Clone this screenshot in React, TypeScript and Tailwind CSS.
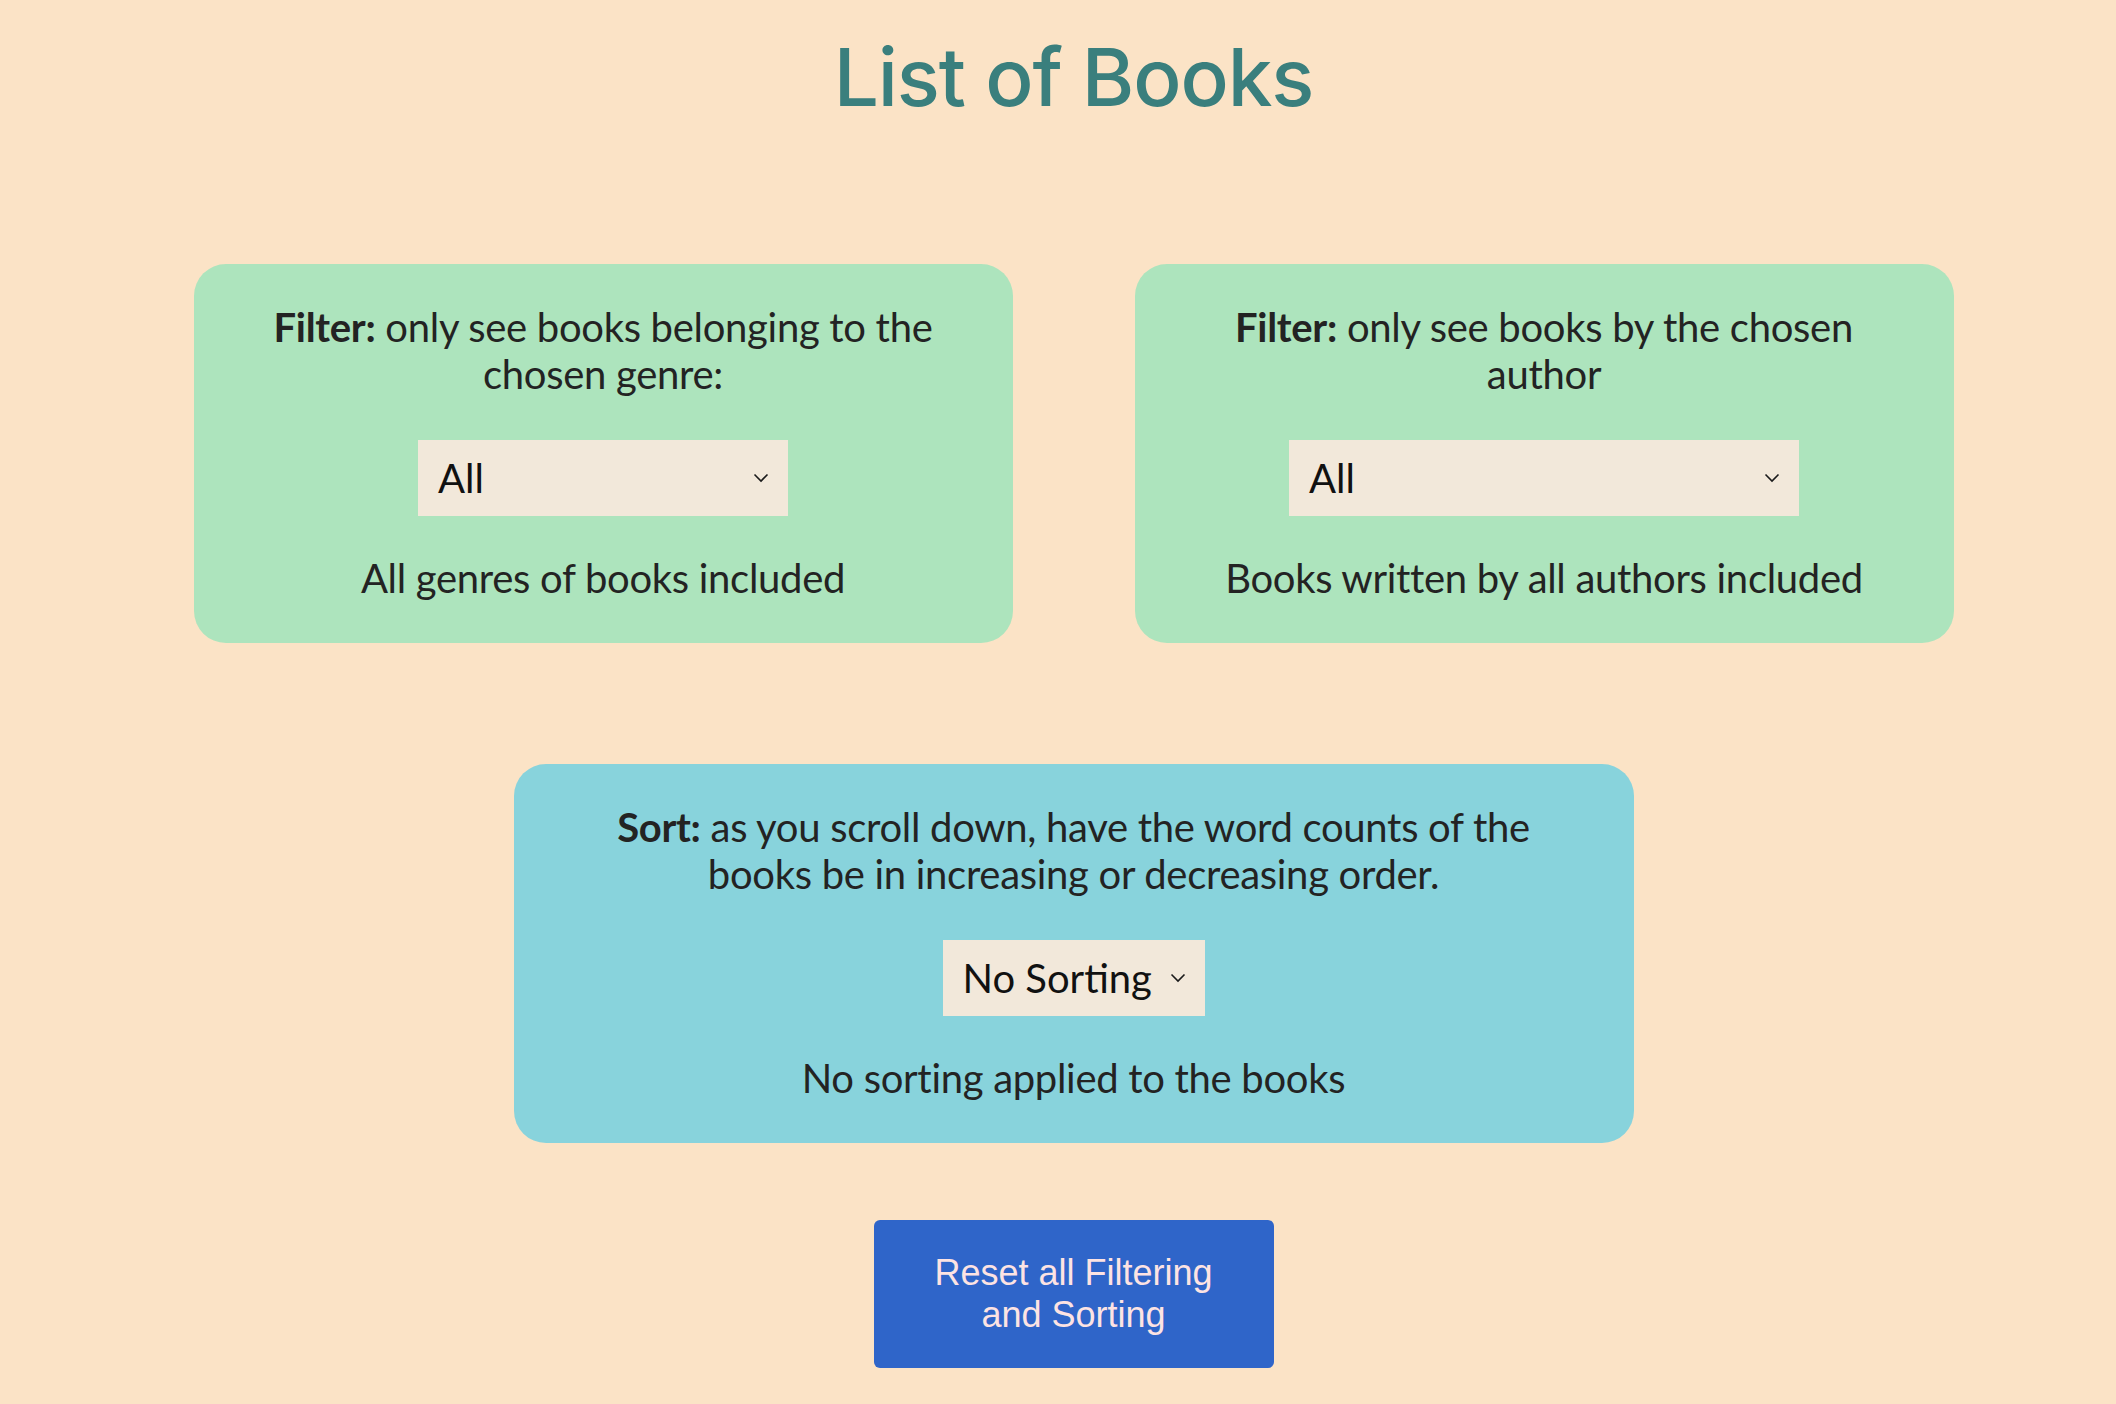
function Chevron() {
  return (
    <svg width="16" height="10" viewBox="0 0 16 10" fill="none" className="shrink-0">
      <path d="M1.5 1.5 L8 8 L14.5 1.5" stroke="#1a1a1a" strokeWidth="1.6" />
    </svg>
  );
}

function FakeSelect({ value, width }: { value: string; width: string }) {
  return (
    <div
      className={`mt-[42px] h-[76px] ${width} bg-[#f2e8da] flex items-center justify-between pl-[20px] pr-[19px] text-[40px] leading-none text-[#111]`}
    >
      <span>{value}</span>
      <Chevron />
    </div>
  );
}

function Card({
  label,
  text,
  value,
  selectWidth,
  note,
  color,
  width,
}: {
  label: string;
  text: string;
  value: string;
  selectWidth: string;
  note: string;
  color: string;
  width: string;
}) {
  return (
    <div
      className={`${width} ${color} rounded-[32px] px-[60px] pt-[40px] pb-[41px] flex flex-col items-center text-[#232323]`}
    >
      <p className="text-[40px] leading-[47px] tracking-[-0.3px] text-center">
        <span className="font-bold">{label}</span> {text}
      </p>
      <FakeSelect value={value} width={selectWidth} />
      <p className="mt-[39px] text-[40px] leading-[47px] tracking-[-0.3px] text-center">{note}</p>
    </div>
  );
}

export default function App() {
  return (
    <div className="min-h-screen bg-[#fbe3c6] pl-[31px] font-['Lato',sans-serif]">
      <div className="flex flex-col items-center">
        <h1 className="mt-[37px] text-[80px] leading-none font-medium text-[#3a7f7d] font-['Inter',sans-serif] tracking-[-1.1px]">
          List of Books
        </h1>

        <div className="mt-[147px] flex gap-[122px]">
          <Card
            label="Filter:"
            text="only see books belonging to the chosen genre:"
            value="All"
            selectWidth="w-[370px]"
            note="All genres of books included"
            color="bg-[#ade4bd]"
            width="w-[819px]"
          />
          <Card
            label="Filter:"
            text="only see books by the chosen author"
            value="All"
            selectWidth="w-[510px]"
            note="Books written by all authors included"
            color="bg-[#ade4bd]"
            width="w-[819px]"
          />
        </div>

        <div className="mt-[121px]">
          <Card
            label="Sort:"
            text="as you scroll down, have the word counts of the books be in increasing or decreasing order."
            value="No Sorting"
            selectWidth="w-[262px]"
            note="No sorting applied to the books"
            color="bg-[#88d3dc]"
            width="w-[1120px]"
          />
        </div>

        <button className="mt-[77px] w-[400px] px-[45px] py-[32px] rounded-[6px] bg-[#2f65c9] text-[#fde3e3] text-[36px] leading-[42px] font-['Liberation_Sans',Arial,sans-serif] text-center">
          Reset all Filtering and Sorting
        </button>
      </div>
    </div>
  );
}
